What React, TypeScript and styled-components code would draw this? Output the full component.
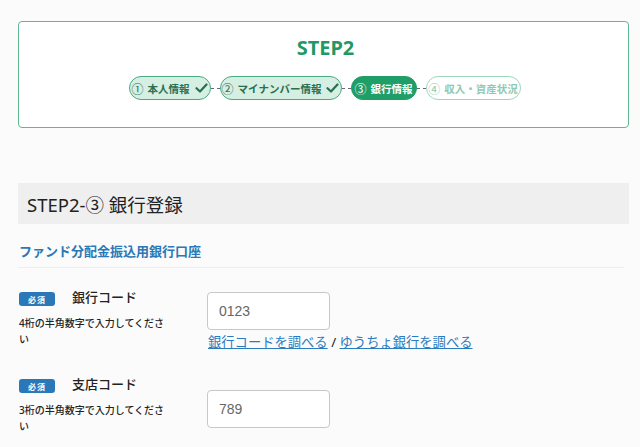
import React from "react";
import styled, { createGlobalStyle } from "styled-components";

const Global = createGlobalStyle`
  html, body { margin: 0; padding: 0; background: #fbfbfb; }
  body { font-family: "Noto Sans", "Noto Sans CJK JP", sans-serif; color: #222; }
  * { box-sizing: border-box; }
`;

const Page = styled.div`
  padding: 21px 11px 0 18px;
`;

const StepBox = styled.section`
  height: 107px;
  border: 1.5px solid #5db893;
  border-radius: 4px;
  background: #fff;
  display: flex;
  flex-direction: column;
  align-items: center;
  padding-top: 14px;
`;

const StepTitle = styled.h1`
  margin: 0 0 0 4px;
  font-size: 20px;
  line-height: 24px;
  font-weight: 700;
  color: #1f9a66;
  font-family: "Noto Sans", "Noto Sans CJK JP", sans-serif;
`;

const Steps = styled.div`
  display: flex;
  align-items: center;
  margin-top: 16px;
  margin-left: 2px;
`;

type PillState = "done" | "active" | "todo";

const Pill = styled.div<{ $state: PillState; $w: number }>`
  height: 24px;
  width: ${(p) => p.$w}px;
  border-radius: 12px;
  display: flex;
  align-items: center;
  justify-content: center;
  gap: 2px;
  font-size: 10.5px;
  font-weight: 700;
  white-space: nowrap;
  border: 1px solid
    ${(p) => (p.$state === "done" ? "#4aa883" : p.$state === "active" ? "#1f9e68" : "#9ed6bd")};
  background: ${(p) => (p.$state === "done" ? "#d5efe3" : p.$state === "active" ? "#1f9e68" : "#fff")};
  color: ${(p) => (p.$state === "done" ? "#2b6e52" : p.$state === "active" ? "#fff" : "#8fcab0")};
`;

const Num = styled.span`
  font-family: "Noto Sans CJK JP", sans-serif;
  font-size: 12px;
  font-weight: 400;
  margin-right: 2px;
`;

const Connector = styled.span`
  width: 9px;
  border-top: 1px dashed #667;
`;

const Check = () => (
  <svg width="13" height="12" viewBox="0 0 13 12" style={{ marginLeft: 3 }}>
    <path d="M1.5 6.2 L5 9.5 L11.5 2.5" fill="none" stroke="#2b6e52" strokeWidth="2.2" strokeLinecap="round" strokeLinejoin="round" />
  </svg>
);

const SectionHeader = styled.h2`
  margin: 55px 0 0;
  height: 41px;
  background: #efefef;
  display: flex;
  align-items: center;
  padding-left: 9px;
  font-size: 18.5px;
  font-weight: 400;
  color: #222;
`;

const SubTitle = styled.h3`
  margin: 19px 5px 0 0;
  padding: 0 0 8px 1px;
  font-size: 13px;
  line-height: 16px;
  font-weight: 700;
  color: #2a78b5;
  border-bottom: 1px solid #eeeeee;
`;

const FormRow = styled.div<{ $top: number }>`
  display: grid;
  grid-template-columns: 189px 1fr;
  margin-top: ${(p) => p.$top}px;
`;

const LabelCol = styled.div`
  display: flex;
  flex-direction: column;
`;

const LabelLine = styled.div`
  display: flex;
  align-items: center;
  height: 14px;
`;

const Badge = styled.span`
  width: 36px;
  height: 14px;
  margin-left: 1px;
  border-radius: 3px;
  background: #2a78b8;
  color: #fff;
  font-size: 8px;
  font-weight: 700;
  display: flex;
  align-items: center;
  justify-content: center;
  letter-spacing: 1px;
`;

const Label = styled.span`
  margin-left: 17px;
  font-size: 13px;
  font-weight: 500;
  color: #222;
  line-height: 14px;
  margin-top: -4px;
`;

const Hint = styled.p`
  margin: 9px 0 0 1px;
  width: 150px;
  font-size: 10px;
  font-weight: 500;
  line-height: 16px;
  color: #222;
`;

const FieldCol = styled.div<{ $offset: number }>`
  padding-top: ${(p) => p.$offset}px;
`;

const Input = styled.input`
  width: 123px;
  height: 38px;
  border: 1px solid #c8c8c8;
  border-radius: 4px;
  background: #fff;
  padding: 0 11px;
  font-family: "Liberation Sans", Arial, sans-serif;
  font-size: 14px;
  color: #666;
  display: block;
  outline: none;
`;

const Links = styled.div`
  margin-top: 3px;
  font-size: 13.3px;
  line-height: 18px;
  color: #222;
  padding-left: 1px;
`;

const Link = styled.a`
  color: #2b7bbf;
  text-decoration: underline;
  cursor: pointer;
`;

export default function App() {
  return (
    <>
      <Global />
      <Page>
        <StepBox>
          <StepTitle>STEP2</StepTitle>
          <Steps>
            <Pill $state="done" $w={82}>
              <Num>①</Num>本人情報
              <Check />
            </Pill>
            <Connector />
            <Pill $state="done" $w={122}>
              <Num>②</Num>マイナンバー情報
              <Check />
            </Pill>
            <Connector />
            <Pill $state="active" $w={66}>
              <Num>③</Num>銀行情報
            </Pill>
            <Connector />
            <Pill $state="todo" $w={95}>
              <Num>④</Num>収入・資産状況
            </Pill>
          </Steps>
        </StepBox>

        <SectionHeader>STEP2-③ 銀行登録</SectionHeader>
        <SubTitle>ファンド分配金振込用銀行口座</SubTitle>

        <FormRow $top={24}>
          <LabelCol>
            <LabelLine>
              <Badge>必須</Badge>
              <Label>銀行コード</Label>
            </LabelLine>
            <Hint>4桁の半角数字で入力してください</Hint>
          </LabelCol>
          <FieldCol $offset={0}>
            <Input defaultValue="0123" />
            <Links>
              <Link>銀行コードを調べる</Link> / <Link>ゆうちょ銀行を調べる</Link>
            </Links>
          </FieldCol>
        </FormRow>

        <FormRow $top={28}>
          <LabelCol>
            <LabelLine>
              <Badge>必須</Badge>
              <Label>支店コード</Label>
            </LabelLine>
            <Hint>3桁の半角数字で入力してください</Hint>
          </LabelCol>
          <FieldCol $offset={11}>
            <Input defaultValue="789" />
          </FieldCol>
        </FormRow>
      </Page>
    </>
  );
}
